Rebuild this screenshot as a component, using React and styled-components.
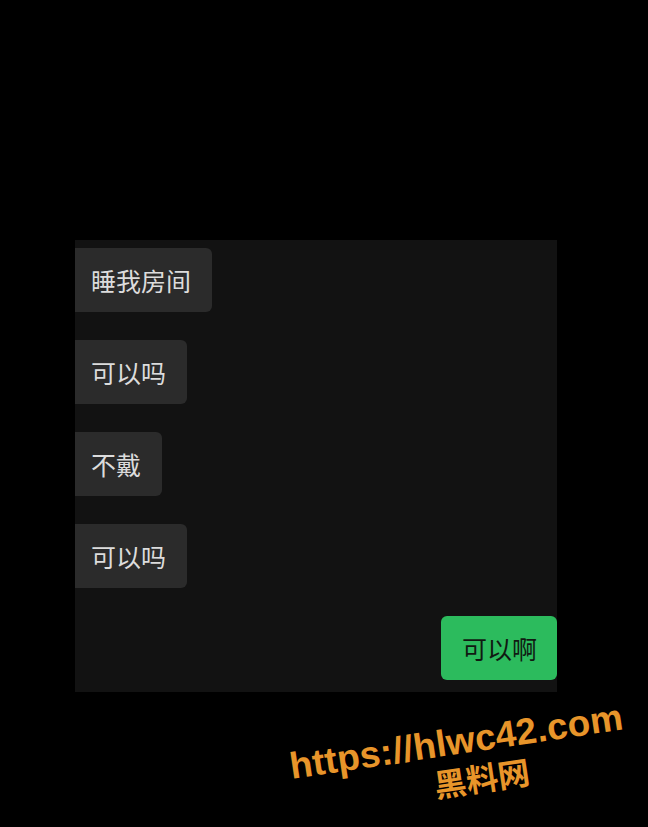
import React from "react";
import styled, { createGlobalStyle } from "styled-components";

const Global = createGlobalStyle`
  html, body {
    margin: 0;
    background: #000;
  }
  body {
    font-family: "Noto Sans CJK SC", "Noto Sans", sans-serif;
  }
`;

const Page = styled.div`
  position: relative;
  width: 648px;
  height: 827px;
  background: #000;
  padding-top: 240px;
  padding-left: 75px;
  box-sizing: border-box;
  overflow: hidden;
`;

const Chat = styled.div`
  width: 482px;
  height: 452px;
  background: #121212;
  padding: 8px 0 12px;
  box-sizing: border-box;
  display: flex;
  flex-direction: column;
  gap: 28px;
`;

const Bubble = styled.div`
  align-self: ${(p) => (p.$mine ? "flex-end" : "flex-start")};
  flex-shrink: 0;
  height: 64px;
  display: flex;
  align-items: center;
  padding: ${(p) => (p.$mine ? "0 20px 0 21px" : "0 21px 0 16px")};
  background: ${(p) => (p.$mine ? "#2cbb5d" : "#2b2b2b")};
  color: ${(p) => (p.$mine ? "#101a12" : "#dcdcdc")};
  font-size: 25px;
  border-radius: ${(p) => (p.$mine ? "6px" : "0 6px 6px 0")};
  box-sizing: border-box;
  white-space: nowrap;
`;

const Watermark = styled.div`
  position: absolute;
  left: 284px;
  top: 722px;
  width: 350px;
  display: flex;
  flex-direction: column;
  align-items: center;
  color: #e8952a;
  font-weight: 700;
  transform: rotate(-8.5deg);
  transform-origin: center;
  line-height: 1.1;
`;

const Url = styled.div`
  font-family: "Liberation Sans", Arial, sans-serif;
  font-size: 37px;
  letter-spacing: 0.2px;
`;

const Site = styled.div`
  font-family: "Noto Sans CJK SC", sans-serif;
  font-size: 32px;
  margin-left: 40px;
`;

const messages = [
  { text: "睡我房间" },
  { text: "可以吗" },
  { text: "不戴" },
  { text: "可以吗" },
];

export default function App() {
  return (
    <>
      <Global />
      <Page>
        <Chat>
          {messages.map((m, i) => (
            <Bubble key={i}>{m.text}</Bubble>
          ))}
          <Bubble $mine>可以啊</Bubble>
        </Chat>
        <Watermark>
          <Url>https://hlwc42.com</Url>
          <Site>黑料网</Site>
        </Watermark>
      </Page>
    </>
  );
}
